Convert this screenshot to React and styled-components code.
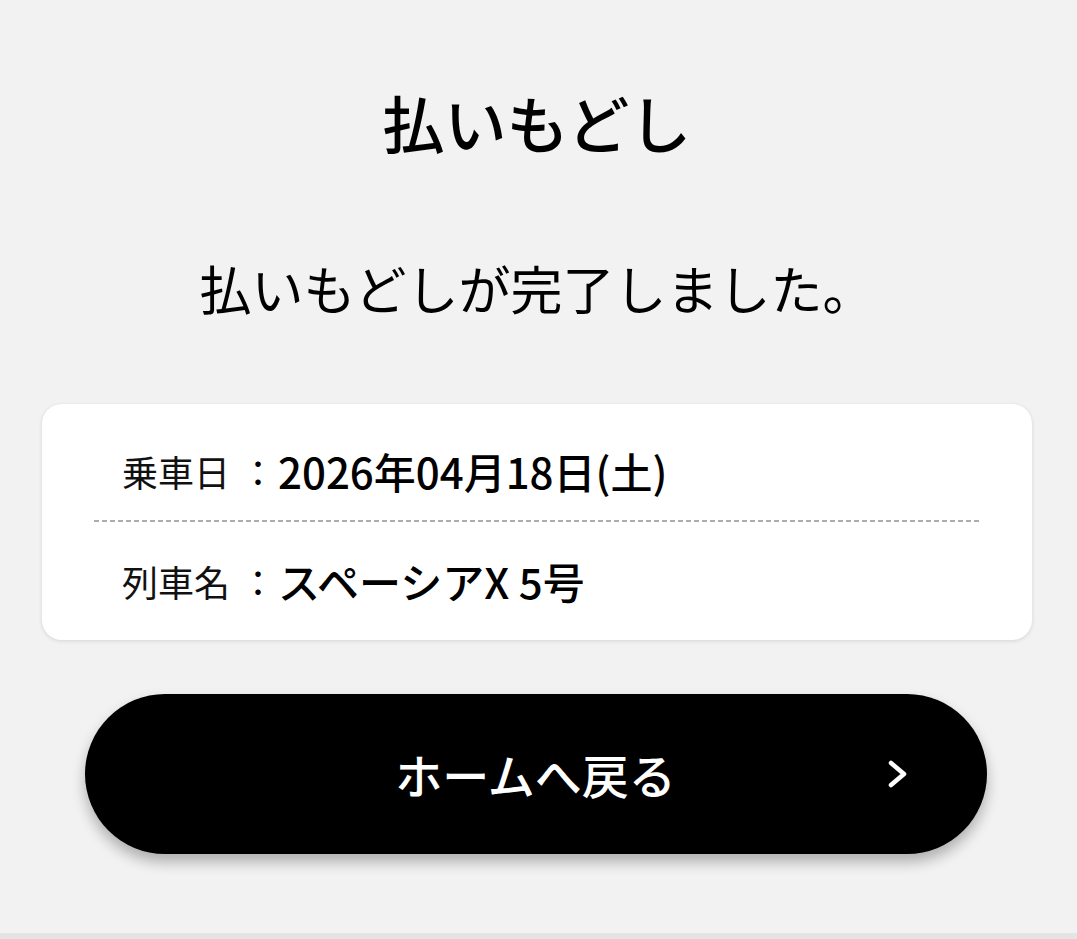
import React from "react";
import styled, { createGlobalStyle } from "styled-components";

const GlobalStyle = createGlobalStyle`
  html, body {
    margin: 0;
    padding: 0;
    background: #e4e4e4;
  }
  body {
    font-family: "Noto Sans CJK JP", "Noto Sans", sans-serif;
    color: #000;
  }
`;

const Page = styled.main`
  background: #f2f2f2;
  height: 933px;
  padding: 82px 45px 0 42px;
  box-sizing: border-box;
  display: flex;
  flex-direction: column;
  align-items: center;
`;

const Title = styled.h1`
  margin: 0;
  font-size: 62px;
  line-height: 80px;
  font-weight: 500;
  text-align: center;
`;

const Message = styled.p`
  margin: 90px 0 0;
  font-size: 52px;
  line-height: 72px;
  font-weight: 400;
  text-align: center;
`;

const Card = styled.section`
  margin-top: 80px;
  width: 100%;
  background: #fff;
  border-radius: 20px;
  box-shadow: 0 1px 4px rgba(0, 0, 0, 0.12);
  padding: 20px 52px 0;
  box-sizing: border-box;
`;

const Row = styled.div`
  display: flex;
  align-items: center;
  padding: ${(p) => (p.$last ? "36px 28px 36px" : "24px 28px 26px")};
  line-height: 46px;
`;

const Divider = styled.hr`
  margin: 0;
  border: none;
  height: 1.5px;
  background-image: repeating-linear-gradient(
    to right,
    #adadad 0 5px,
    transparent 5px 8px
  );
`;

const Label = styled.span`
  font-size: 36px;
  font-weight: 400;
  color: #111;
  width: 118px;
`;

const Colon = styled.span`
  font-size: 36px;
  font-weight: 400;
  width: 38px;
`;

const Value = styled.span`
  font-size: 42px;
  font-weight: 500;
`;

const HomeButton = styled.button`
  margin: 54px 3px 0 0;
  width: 902px;
  height: 160px;
  border: none;
  border-radius: 80px;
  background: #000;
  color: #fff;
  font-family: inherit;
  font-size: 47px;
  font-weight: 500;
  box-shadow: 0 8px 14px rgba(0, 0, 0, 0.28);
  position: relative;
  display: flex;
  align-items: center;
  justify-content: center;
  cursor: pointer;
`;

const Chevron = styled.svg`
  position: absolute;
  right: 76px;
  top: 50%;
  transform: translateY(-50%);
`;

const rows = [
  { label: "乗車日", value: "2026年04月18日(土)" },
  { label: "列車名", value: "スペーシアX 5号" },
];

const App = () => (
  <>
    <GlobalStyle />
    <Page>
      <Title>払いもどし</Title>
      <Message>払いもどしが完了しました。</Message>
      <Card>
        {rows.map((row, idx) => (
          <React.Fragment key={idx}>
            {idx > 0 && <Divider />}
            <Row $last={idx === rows.length - 1}>
              <Label>{row.label}</Label>
              <Colon>：</Colon>
              <Value>{row.value}</Value>
            </Row>
          </React.Fragment>
        ))}
      </Card>
      <HomeButton>
        ホームへ戻る
        <Chevron width="26" height="34" viewBox="0 0 26 34">
          <path
            d="M6 6 L19 17 L6 28"
            fill="none"
            stroke="#fff"
            strokeWidth="4.5"
            strokeLinecap="round"
            strokeLinejoin="round"
          />
        </Chevron>
      </HomeButton>
    </Page>
  </>
);

export default App;
